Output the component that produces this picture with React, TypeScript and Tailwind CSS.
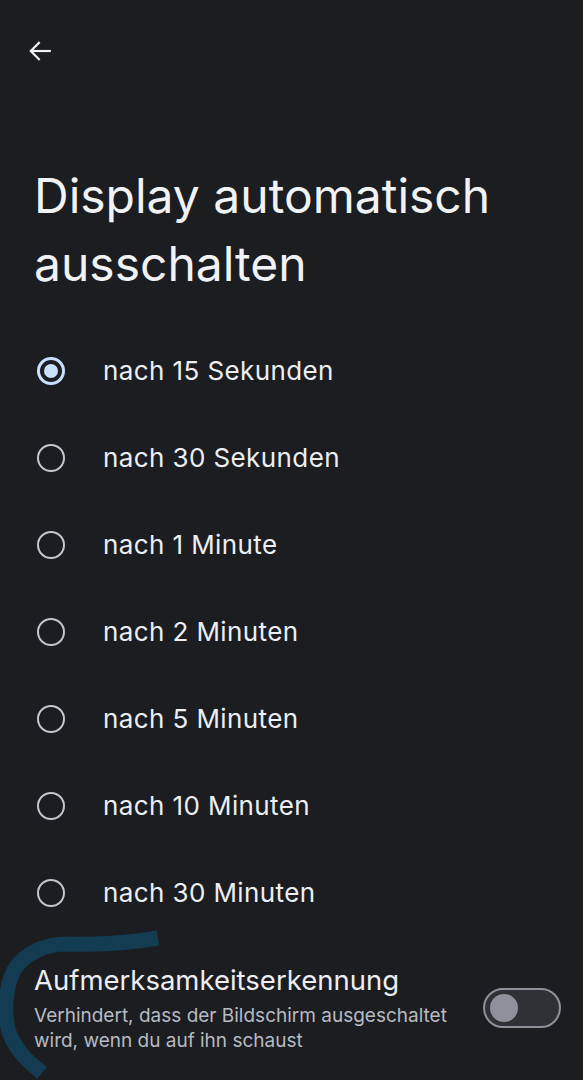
import React from "react";

const options = [
  "nach 15 Sekunden",
  "nach 30 Sekunden",
  "nach 1 Minute",
  "nach 2 Minuten",
  "nach 5 Minuten",
  "nach 10 Minuten",
  "nach 30 Minuten",
];

export default function App() {
  return (
    <div
      className="relative w-[583px] h-[1080px] overflow-hidden bg-[#1b1d21] text-[#e6e7eb]"
      style={{ fontFamily: 'Inter, "Noto Sans", sans-serif' }}
    >
      <div className="h-[102px] pl-[27px] pt-[38px]">
        <svg width="26" height="26" viewBox="0 0 24 24" fill="none" stroke="#f1f2f4" strokeWidth="2" strokeLinecap="square">
          <path d="M21 12H4" />
          <path d="M11 4.5L3.5 12L11 19.5" />
        </svg>
      </div>
      <h1 className="mt-[60px] pl-[34px] pr-[20px] text-[48px] leading-[68px] text-[#f1f2f4]">
        Display automatisch ausschalten
      </h1>
      <div className="mt-[29px] flex flex-col">
        {options.map((o, i) => (
          <div key={o} className="flex h-[87px] items-center">
            <div className="w-[103px] flex justify-start pl-[37px]">
              {i === 0 ? (
                <div className="w-[28px] h-[28px] rounded-full border-[3px] border-[#c8e0ff] flex items-center justify-center">
                  <div className="w-[14px] h-[14px] rounded-full bg-[#c8e0ff]" />
                </div>
              ) : (
                <div className="w-[28px] h-[28px] rounded-full border-[2.5px] border-[#c4c6cc]" />
              )}
            </div>
            <span className="text-[26px] tracking-[0.4px] text-[#eceef2]">{o}</span>
          </div>
        ))}
      </div>
      <svg className="absolute left-0 top-[925px]" width="170" height="155" viewBox="0 0 170 155" fill="none">
        <path
          d="M158 13 C 130 18, 100 20, 67 19 C 45 19, 25 28, 14 45 C 4 65, 4 95, 10 110 C 18 128, 30 138, 42 148"
          stroke="#133b51"
          strokeWidth="15"
          strokeLinecap="butt"
        />
      </svg>
      <div className="relative flex items-center pl-[34px] pr-[22px] mt-[27px]">
        <div className="flex-1">
          <div className="text-[27.5px] leading-[34px] text-[#eceef2]">Aufmerksamkeitserkennung</div>
          <div className="text-[19px] leading-[25px] text-[#b7bac1] mt-[6px]">
            Verhindert, dass der Bildschirm ausgeschaltet wird, wenn du auf ihn schaust
          </div>
        </div>
        <div className="ml-[20px] w-[78px] h-[40px] rounded-full border-[2px] border-[#8e9199] bg-[#2f3136] flex items-center pl-[5px]">
          <div className="w-[28px] h-[28px] rounded-full bg-[#8e9199]" />
        </div>
      </div>
    </div>
  );
}
